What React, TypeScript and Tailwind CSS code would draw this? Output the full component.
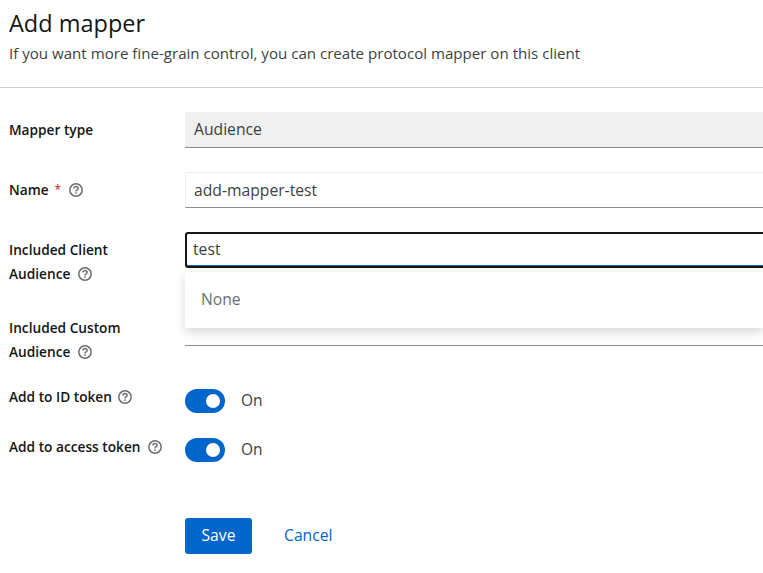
import React from 'react';

const font = { fontFamily: '"Open Sans", "Liberation Sans", sans-serif' };

const HelpIcon = () => (
  <svg width="14" height="14" viewBox="0 0 14 14" fill="none" className="shrink-0">
    <circle cx="7" cy="7" r="6.2" stroke="#6a6e73" strokeWidth="1.5" />
    <path d="M4.9 5.5c.1-1.2 1-1.9 2.1-1.9 1.2 0 2.1.7 2.1 1.8 0 1.5-2.1 1.5-2.1 3" stroke="#6a6e73" strokeWidth="1.5" />
    <rect x="6.25" y="9.4" width="1.5" height="1.5" fill="#6a6e73" />
  </svg>
);

const Label = ({ children, help = true, gap = 'ml-2' }: { children: React.ReactNode; help?: boolean; gap?: string }) => (
  <span className="inline-flex items-center text-[13.7px] font-semibold leading-6 text-[#151515]">
    {children}
    {help && <span className={gap}><HelpIcon /></span>}
  </span>
);

const Toggle = () => (
  <div className="flex items-center gap-4">
    <div className="flex h-6 w-10 items-center justify-end rounded-full bg-[#06c] pr-[5px]">
      <div className="h-[14px] w-[14px] rounded-full bg-white" />
    </div>
    <span className="text-[15.5px] text-[#3c3f42]">On</span>
  </div>
);

export default function App() {
  return (
    <div className="h-[573px] w-[763px] overflow-hidden bg-white" style={font}>
      <div className="h-[88px] border-b border-[#d2d2d2] pl-[9px] pt-[5px]">
        <h1 className="text-[23.5px] leading-[36px] text-[#151515]">Add mapper</h1>
        <p className="text-[15.1px] leading-[24px] text-[#3c3f42]">If you want more fine-grain control, you can create protocol mapper on this client</p>
      </div>

      <div className="grid grid-cols-[176px_1fr] gap-y-6 pl-[9px] pt-6">
        <div className="flex h-9 items-center"><Label help={false}>Mapper type</Label></div>
        <div className="flex h-9 items-center border-b border-[#8a8d90] bg-[#f0f0f0] pl-[9px] pt-px text-[15.7px] text-[#3c3f42]">Audience</div>

        <div className="flex h-9 items-center">
          <Label>Name <span className="ml-1.5 text-[12px] font-normal text-[#c9190b]">*</span></Label>
        </div>
        <div className="flex h-9 items-center border border-b-[#8a8d90] border-r-0 border-[#f0f0f0] pl-2 pt-px text-[15.7px] text-[#3c3f42]">add-mapper-test</div>

        <div className="pt-1.5 text-[13.7px] font-semibold leading-6 text-[#151515]">
          <div>Included Client</div>
          <Label>Audience</Label>
        </div>
        <div className="relative">
          <div className="flex h-9 items-center rounded-l-[3px] border-2 border-r-0 border-[#151515] pb-px pl-1.5 text-[15.7px] text-[#3c3f42] shadow-[inset_0_-1px_0_#06c]">test</div>
          <div className="absolute left-0 right-0 top-10 z-10 flex h-14 items-center bg-white pl-4 text-[15.7px] text-[#6a6e73] shadow-[0_4px_10px_rgba(3,3,3,0.16)]">None</div>
        </div>

        <div className="pt-1.5 text-[13.7px] font-semibold leading-6 text-[#151515]">
          <div>Included Custom</div>
          <Label>Audience</Label>
        </div>
        <div className="h-9 border-b border-[#8a8d90]" />

        <div className="mt-px flex h-4 items-center"><Label gap="ml-1.5">Add to ID token</Label></div>
        <div className="mt-px"><Toggle /></div>

        <div className="mt-px flex h-[18px] items-center"><Label>Add to access token</Label></div>
        <div className="mt-px"><Toggle /></div>

        <div />
        <div className="mt-8 flex items-center gap-8">
          <button className="h-9 w-[67px] rounded-[3px] bg-[#06c] text-[15.7px] text-white">Save</button>
          <span className="text-[15.7px] text-[#06c]">Cancel</span>
        </div>
      </div>
    </div>
  );
}
